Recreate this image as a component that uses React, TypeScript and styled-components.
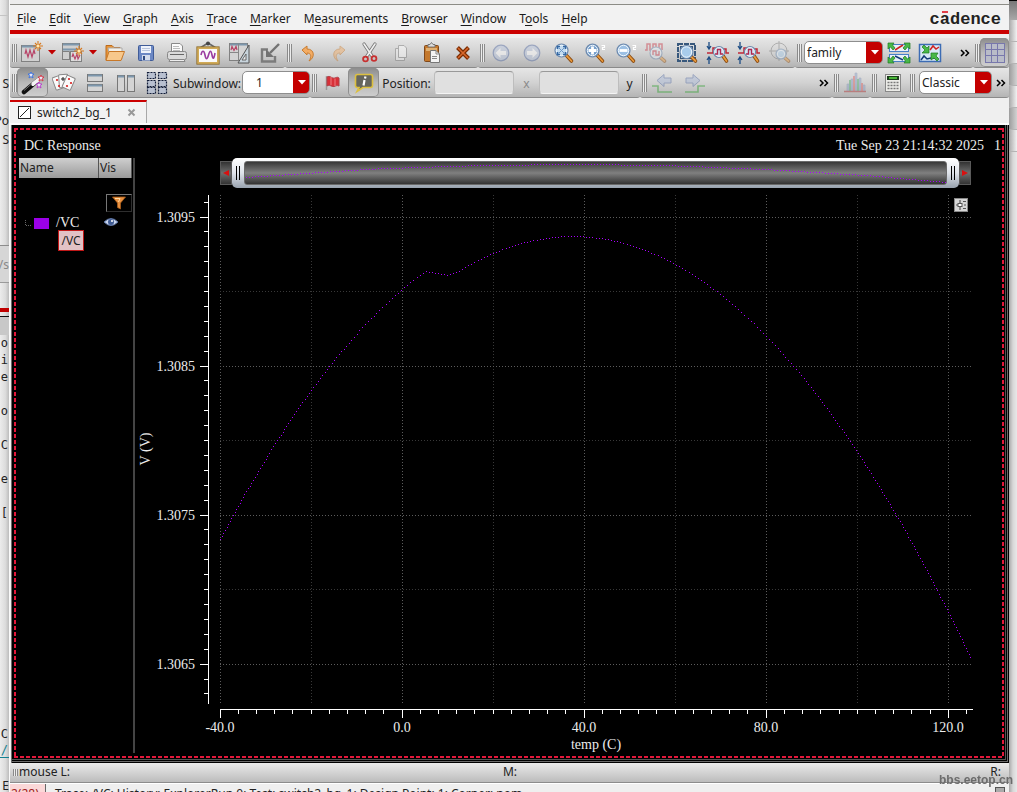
import React, { useLayoutEffect, useMemo, useRef, useState } from 'react';
import styled, { createGlobalStyle, css } from 'styled-components';

const sans = '"Noto Sans", "Open Sans", sans-serif';
const serif = '"Liberation Serif", serif';
const mono = '"DejaVu Sans Mono", monospace';
const purple = '#9b00e8';

const GlobalStyle = createGlobalStyle`
  *, *::before, *::after { box-sizing: border-box; }
  html, body, #root { height: 100%; }
  body { margin: 0; overflow: hidden; background: #ececec; font: 12px/16px ${sans}; color: #222; }
  button, select, input { font: inherit; color: inherit; margin: 0; }
  svg { display: block; flex: none; }
`;

/* ---------- desktop ---------- */

const Desktop = styled.div`
  display: flex;
  height: 100vh;
  overflow: hidden;
`;

const BackWindow = styled.aside`
  flex: none;
  width: 9px;
  overflow: hidden;
  display: flex;
  flex-direction: column;
  background: linear-gradient(90deg, #ececec, #dcdcdc 60%, #bdbdbd);
`;

const PeekRow = styled.div<{ $h: number; $fill?: string; $line?: string; $mono?: boolean; $ink?: string }>`
  flex: none;
  height: ${(p) => p.$h}px;
  line-height: ${(p) => p.$h}px;
  background: ${(p) => p.$fill ?? 'none'};
  border-bottom: ${(p) => (p.$line ? `1px solid ${p.$line}` : '0')};
  color: ${(p) => p.$ink ?? '#222'};
  font-family: ${(p) => (p.$mono ? mono : sans)};
  font-size: 12px;
  white-space: pre;
  display: flex;
  justify-content: flex-end;
  padding-right: ${(p) => (p.$mono ? 1 : 0)}px;
`;

const RightEdge = styled.aside`
  flex: none;
  width: 8px;
  display: flex;
  flex-direction: column;
  background: linear-gradient(90deg, #a8a8a8, #d8d8d8 50%, #e8e8e8);
`;

const EdgeTitle = styled.div`
  height: 20px;
  border-top: 1px solid #000;
  background: linear-gradient(#777, #a8a8a8);
`;

const EdgeCell = styled.div<{ $dark?: boolean }>`
  height: 22px;
  border-bottom: 1px solid #b4b4b4;
  background: ${(p) => (p.$dark ? 'linear-gradient(90deg, #9c9c9c, #d2d2d2)' : 'linear-gradient(90deg, #a8a8a8, #f2f2f2)')};
`;

const Window = styled.main`
  flex: 1;
  min-width: 0;
  display: flex;
  flex-direction: column;
  background: #efefef;
  border-left: 1px solid #fafafa;
`;

const TitleEdge = styled.div`
  flex: none;
  height: 5px;
  background: #ececec;
  border-bottom: 1px solid #8c8c86;
`;

/* ---------- menu ---------- */

const MenuBar = styled.nav`
  flex: none;
  height: 29px;
  display: flex;
  align-items: center;
  padding: 2px 8px 0 1px;
  background: #f2f2f2;
  border-bottom: 4px solid #cb0000;
`;

const MenuItem = styled.button`
  border: 0;
  background: none;
  padding: 0 7px 0 6px;
  color: #1a1a1a;
  white-space: nowrap;
  u { text-underline-offset: 2px; }
`;

const Brand = styled.div`
  position: relative;
  margin-left: auto;
  padding-top: 3px;
  font: bold 17px/20px "Liberation Mono", monospace;
  color: #222;
  &::after {
    content: '';
    position: absolute;
    left: 12px;
    top: 4px;
    width: 6px;
    height: 2px;
    background: #e0404a;
  }
`;

/* ---------- toolbars ---------- */

const ToolRows = styled.div`
  flex: none;
  padding-top: 4px;
`;

const ToolRow = styled.div`
  display: flex;
  height: 30px;
  background: #dedede;
`;

const Group = styled.div<{ $grow?: boolean }>`
  flex: ${(p) => (p.$grow ? '1 1 0' : 'none')};
  min-width: 0;
  display: flex;
  align-items: center;
  padding-left: 2px;
  background: linear-gradient(#e6e6e6, #d2d2d2 50%, #b4b4b4);
  border-bottom: 1px solid #8a8a8a;
  border-radius: 0 0 3px 3px;
`;

const Grip = styled.span`
  flex: none;
  width: 5px;
  height: 18px;
  background: repeating-linear-gradient(90deg, #8a8a8a 0 1px, #ececec 1px 2px);
`;

const ToolButton = styled.button<{ $w?: number; $on?: boolean; $dim?: boolean }>`
  flex: none;
  width: ${(p) => p.$w ?? 31}px;
  height: 29px;
  padding: 0;
  border: 0;
  background: none;
  display: flex;
  align-items: center;
  justify-content: center;
  border-radius: 5px;
  ${(p) => p.$on && css`
    background: linear-gradient(#8c8c8c, #b8b8b8 50%, #cfcfcf);
    box-shadow: inset 0 0 0 1px #8e8e8e;
  `}
  svg { opacity: ${(p) => (p.$dim ? 0.45 : 1)}; }
`;

const MoreButton = styled.button`
  flex: none;
  width: 17px;
  margin-left: auto;
  padding: 0;
  border: 0;
  background: none;
  display: flex;
  justify-content: center;
`;

const ToolLabel = styled.label<{ $w?: number; $dim?: boolean }>`
  flex: none;
  min-width: ${(p) => p.$w ?? 0}px;
  padding-top: 2px;
  text-align: center;
  white-space: nowrap;
  color: ${(p) => (p.$dim ? '#8a8a8a' : '#222')};
`;

const CoordInput = styled.input`
  width: 80px;
  height: 23px;
  border: 1px solid #bdbdbd;
  border-top-color: #999;
  border-bottom-color: #f4f4f4;
  border-radius: 4px;
  background: #e0e0e0;
  padding: 0 4px;
`;

const Combo = styled.span<{ $w: number; $gap?: number }>`
  flex: none;
  position: relative;
  display: block;
  width: ${(p) => p.$w}px;
  height: 23px;
  margin-left: ${(p) => p.$gap ?? 0}px;
  select {
    appearance: none;
    display: block;
    width: 100%;
    height: 100%;
    border: 1px solid #8e8e8e;
    border-radius: 5px;
    padding: 1px 18px 0 2px;
    background: linear-gradient(90deg, #fff calc(100% - 16px), #c40000 calc(100% - 16px));
  }
  svg {
    position: absolute;
    right: 4px;
    top: 9px;
    pointer-events: none;
  }
`;

const IndentSelect = styled.select`
  text-indent: 11px;
`;

/* ---------- tabs ---------- */

const TabStrip = styled.div`
  flex: none;
  height: 27px;
  padding-top: 2px;
  display: flex;
  border-bottom: 2px solid #fdfdfd;
`;

const Tab = styled.div`
  display: flex;
  align-items: center;
  width: 137px;
  padding: 0 10px 0 8px;
  gap: 6px;
  border-top: 2px solid #cb0000;
  border-right: 1px solid #a8a8a8;
  background: #f2f2f2;
`;

const TabTitle = styled.span`
  flex: 1;
`;

const CloseButton = styled.button`
  border: 0;
  padding: 0;
  background: none;
`;

/* ---------- graph frame ---------- */

const Frame = styled.section`
  flex: 1;
  min-height: 0;
  margin-left: 1px;
  padding: 3px 5px 5px 2px;
  background: #000;
  border-left: 1px solid #6a6a6a;
  box-shadow: inset -1px -1px 0 #000, inset -2px -2px 0 #6a6a6a, inset -3px -3px 0 #000, inset -4px -4px 0 #555;
  display: flex;
`;

const dash = '#e3173a 0 4px, transparent 4px 6px';

const Subwindow = styled.div`
  flex: 1;
  min-width: 0;
  padding: 2px;
  display: flex;
  flex-direction: column;
  color: #ececec;
  font-family: ${serif};
  font-size: 14px;
  background:
    repeating-linear-gradient(90deg, ${dash}) 0 0 / 100% 2px no-repeat,
    repeating-linear-gradient(90deg, ${dash}) 0 100% / 100% 2px no-repeat,
    repeating-linear-gradient(180deg, ${dash}) 0 0 / 2px 100% no-repeat,
    repeating-linear-gradient(180deg, ${dash}) 100% 0 / 2px 100% no-repeat,
    #000;
`;

const GraphHeader = styled.header`
  flex: none;
  height: 28px;
  padding: 3px 1px 0 8px;
  display: flex;
  align-items: center;
  gap: 10px;
`;

const Stamp = styled.time`
  margin-left: auto;
`;

const GraphBody = styled.div`
  flex: 1;
  min-height: 0;
  display: flex;
`;

const Legend = styled.div`
  position: relative;
  flex: none;
  width: 116px;
  margin-left: 3px;
  margin-bottom: 3px;
  border-right: 2px solid #444;
`;

const LegendTable = styled.table`
  width: 113px;
  table-layout: fixed;
  border-spacing: 0;
  th, td { padding: 0; vertical-align: middle; }
`;

const HeadCell = styled.th<{ $w: number }>`
  width: ${(p) => p.$w}px;
  height: 20px;
  background: linear-gradient(#cfcfcf, #9a9a9a);
  border-right: 1px solid #555;
  font: 12px/20px ${sans};
  color: #222;
  text-align: left;
  && { padding-left: 1px; }
`;

const FilterCell = styled.td`
  height: 36px;
`;

const FilterButton = styled.button`
  display: flex;
  align-items: center;
  justify-content: center;
  width: 26px;
  height: 18px;
  margin: 14px 0 0 auto;
  padding: 0;
  background: #000;
  border: 1px solid #777;
  border-right-color: #2e2e2e;
  border-bottom-color: #2e2e2e;
`;

const SignalCell = styled.td`
  height: 18px;
  font-size: 14px;
  line-height: 18px;
`;

const SignalRow = styled.div`
  display: flex;
  align-items: center;
  padding-left: 6px;
`;

const Swatch = styled.span`
  width: 15px;
  height: 11px;
  margin: 0 7px 0 3px;
  background: ${purple};
`;

const EyeButton = styled.button`
  display: block;
  padding: 0;
  margin-left: 5px;
  border: 0;
  background: none;
`;

const SignalTip = styled.div`
  position: absolute;
  left: 39px;
  top: 72px;
  width: 26px;
  height: 21px;
  border: 1px solid #c01818;
  background: #e2c2c5;
  color: #222;
  font: 12px/19px ${sans};
  text-align: center;
`;

const PlotColumn = styled.div`
  position: relative;
  flex: 1;
  min-width: 0;
  display: flex;
  flex-direction: column;
`;

const RangeBar = styled.div`
  flex: none;
  height: 30px;
  margin: 0 31px 0 85px;
  display: flex;
  align-items: center;
`;

const PanButton = styled.button`
  flex: none;
  width: 12px;
  height: 24px;
  padding: 0;
  border: 1px solid #5a5a5a;
  background: linear-gradient(#333, #6e6e6e 50%, #333);
  display: flex;
  align-items: center;
  justify-content: center;
`;

const RangeWindow = styled.div`
  flex: 1;
  min-width: 0;
  height: 30px;
  display: flex;
  align-items: center;
  border-radius: 5px;
  background: linear-gradient(#fff, #dfe3ea 50%, #98a2ae);
`;

const RangeHandle = styled.button`
  flex: none;
  width: 12px;
  height: 30px;
  padding: 0;
  border: 0;
  background: none;
  display: flex;
  align-items: center;
  justify-content: center;
  &::before {
    content: '';
    width: 4px;
    height: 14px;
    border: solid #000;
    border-width: 0 1px;
  }
`;

const Overview = styled.div`
  flex: 1;
  min-width: 0;
  height: 24px;
  border: 1px solid #6a6a6a;
  border-radius: 3px;
  background: linear-gradient(#383838, #808080 50%, #333);
  svg { width: 100%; height: 100%; }
`;

const PlotArea = styled.div`
  flex: 1;
  min-height: 0;
  min-width: 0;
  overflow: hidden;
`;

const PlotSettings = styled.button`
  position: absolute;
  right: 34px;
  top: 40px;
  width: 14px;
  height: 14px;
  padding: 0;
  border: 1px solid #888;
  background: #d6d6d6;
`;

/* ---------- status ---------- */

const MouseBar = styled.div`
  flex: none;
  height: 20px;
  padding: 0 8px 1px 3px;
  display: grid;
  grid-template-columns: 1fr auto 1fr;
  align-items: center;
  background: linear-gradient(#eaeaea, #bcbcbc);
  border-bottom: 1px solid #8c8c8c;
`;

const MouseLeft = styled.span`
  display: flex;
  align-items: center;
  gap: 1px;
`;

const MouseMiddle = styled.span`
  padding-left: 6px;
`;

const SmallGrip = styled(Grip)`
  height: 7px;
`;

const MouseRight = styled.span`
  text-align: right;
`;

const StatusBar = styled.footer`
  flex: none;
  position: relative;
  height: 9px;
  border-top: 1px solid #fff;
  display: flex;
  overflow: hidden;
  line-height: 19px;
  white-space: nowrap;
`;

const StatusCount = styled.span`
  width: 36px;
  padding-left: 1px;
  background: #fbd8d8;
  border-right: 1px solid #666;
  color: #a02020;
`;

const StatusText = styled.span`
  flex: 1;
  padding-left: 9px;
`;

const ResizeMark = styled.span`
  flex: none;
  width: 10px;
  height: 10px;
  margin: 3px 4px 0 0;
  border: 1px solid #555;
  background: #aaa;
`;

const Watermark = styled.div`
  position: fixed;
  right: 4px;
  bottom: 4px;
  font: bold 12px/16px "Liberation Sans", sans-serif;
  color: #6c6c6c;
`;

/* ---------- icons ---------- */

const Svg = ({ children, size = 24 }: { children: React.ReactNode; size?: number }) => (
  <svg width={size} height={size} viewBox={`0 0 ${size} ${size}`} fill="none" aria-hidden="true">{children}</svg>
);

const Caret = ({ color }: { color: string }) => (
  <svg width="8" height="5" viewBox="0 0 8 5" aria-hidden="true"><path d="M0 0H8L4 4.5Z" fill={color} /></svg>
);

const Spark = ({ x, y }: { x: number; y: number }) => (
  <g transform={`translate(${x} ${y})`} stroke="#d87a20" strokeWidth="1.1">
    <path d="M0-5V5M-5 0H5M-3-3L3 3M3-3L-3 3" /><circle r="1.6" fill="#ffe9b0" stroke="none" />
  </g>
);

const IconNewGraph = () => (
  <Svg>
    <rect x="2.5" y="4.5" width="18" height="16" fill="#d0d0d0" stroke="#808080" />
    <path d="M3 5.5H20" stroke="#7d97ad" strokeWidth="2" />
    <path d="M6 13L7 9L9 16L11 9L13 16L15 9L16 13" stroke="#b84468" strokeWidth="1.2" />
    <Spark x={19} y={5} />
  </Svg>
);
const IconNewSub = () => (
  <Svg>
    <rect x="2.5" y="2.5" width="17" height="16" fill="#cfcfcf" stroke="#808080" />
    <path d="M3 3.5H19M3 8.5H19" stroke="#7d97ad" strokeWidth="2" />
    <path d="M2.5 10.5H9.5V18" stroke="#808080" />
    <rect x="10.5" y="10.5" width="11" height="10" fill="#ddd" stroke="#808080" />
    <path d="M12 16L13 13L15 18L17 13L18 18L20 14" stroke="#b84468" strokeWidth="1.2" />
    <Spark x={19} y={10} />
  </Svg>
);
const IconOpen = () => (
  <Svg>
    <path d="M3 19V4.5H9L11 6.5H17V9" fill="#e8963a" stroke="#bb6a1c" />
    <path d="M5 7H19V18H7Z" fill="#f4f0e8" stroke="#aaa" />
    <path d="M3 19.5L6 10.5H21.5L18 19.5Z" fill="#f7c88c" stroke="#c87828" />
  </Svg>
);
const IconSave = () => (
  <Svg>
    <rect x="4.5" y="4.5" width="15" height="15" rx="1" fill="#6c88c4" stroke="#405c98" />
    <rect x="7" y="5" width="10" height="7" fill="#eef2fa" />
    <path d="M8 7.5H16M8 9.5H16" stroke="#b8c4dc" />
    <rect x="8" y="14" width="8" height="5.5" fill="#d4dcec" /><rect x="9" y="15" width="2" height="4" fill="#304a80" />
  </Svg>
);
const IconPrint = () => (
  <Svg>
    <path d="M6.5 12V2.5H15L17.5 5V12" fill="#fafafa" stroke="#888" />
    <path d="M8 5.5H14M8 7.5H15M8 9.5H15" stroke="#bbb" />
    <rect x="2.5" y="10.5" width="19" height="8" rx="2" fill="#dadada" stroke="#888" />
    <path d="M5 13.5H19" stroke="#666" />
    <path d="M5 18.5H19L20 20.5H4Z" fill="#eee" stroke="#888" />
  </Svg>
);
const IconPicture = () => (
  <Svg>
    <path d="M4 7L12 2L20 7" stroke="#666" strokeWidth="1.5" /><circle cx="12" cy="2.5" r="2" fill="#444" />
    <rect x="2" y="7" width="20" height="15" fill="#fafafa" stroke="#d0aa58" strokeWidth="2" />
    <rect x=".8" y="5.8" width="22.4" height="17.4" stroke="#8c6a28" strokeWidth=".8" />
    <path d="M5 14C6 9 8 9 9 14S11 19 12.5 14S15 9 16 14S18 18 19 12" stroke="#9a3ca0" strokeWidth="1.6" />
  </Svg>
);
const IconEditGraph = () => (
  <Svg>
    <rect x="2.5" y="2.5" width="18" height="17" fill="#d4d4d4" stroke="#808080" />
    <path d="M3 3.5H20" stroke="#7d97ad" strokeWidth="2" />
    <path d="M2.5 11.5H11.5V3M11.5 11V19" stroke="#888" />
    <path d="M4 9L5 5.5L7 9.5L9 5.5L10 9" stroke="#b84468" strokeWidth="1.2" />
    <path d="M22 4V22H11Z" fill="#c8d4dc" stroke="#555" /><path d="M19 13V19H15Z" fill="#eee" stroke="#666" />
  </Svg>
);
const IconImport = () => (
  <Svg>
    <path d="M10 8.5H4V20.5H17V15" stroke="#7c7c7c" strokeWidth="2.4" />
    <path d="M21 3L12 12" stroke="#727272" strokeWidth="2.4" /><path d="M8 8V16H16Z" fill="#727272" />
  </Svg>
);
const IconUndo = ({ flip }: { flip?: boolean }) => (
  <Svg>
    <g transform={flip ? 'translate(24 0) scale(-1 1)' : undefined}>
      <path d="M6 9L11 5V8C19 8 19 17 13 20C16 15.500 15 12 11 12V14Z" fill="#f3ac64" stroke="#c87c30" strokeLinejoin="round" />
    </g>
  </Svg>
);
const IconCut = () => (
  <Svg>
    <path d="M6 3L14 15M17 3L9 15" stroke="#777" strokeWidth="3.2" strokeLinecap="round" />
    <path d="M6 3L14 15M17 3L9 15" stroke="#f0f0f0" strokeWidth="1.6" strokeLinecap="round" />
    <circle cx="7.5" cy="18" r="2.4" stroke="#c83030" strokeWidth="1.8" /><circle cx="16" cy="17.5" r="2.4" stroke="#c83030" strokeWidth="1.8" />
  </Svg>
);
const IconCopy = () => (
  <Svg>
    <path d="M6.5 7.5H15.5V19.5H6.5Z" fill="#f4f4f4" stroke="#777" /><path d="M9.5 4.5H15L17.5 7V16.5H9.5Z" fill="#fff" stroke="#777" />
  </Svg>
);
const IconPaste = () => (
  <Svg>
    <rect x="4.5" y="4.5" width="14" height="16" rx="1" fill="#c4782c" stroke="#80481a" />
    <rect x="6" y="7" width="11" height="3" fill="#e0b070" /><path d="M8 6V3.5H10L11.5 1.5L13 3.5H15V6Z" fill="#ddd" stroke="#777" />
    <path d="M10.5 9.5H16L19.5 13V21.5H10.5Z" fill="#f4f4f4" stroke="#777" /><path d="M16 9.5V13H19.5M12 15.5H17M12 17.5H17" stroke="#888" />
  </Svg>
);
const IconDelete = () => (
  <Svg>
    <path d="M6.5 6.5L17.5 17.5M17.5 6.5L6.5 17.5" stroke="#7c2c00" strokeWidth="4" />
    <path d="M7 7L17 17M17 7L7 17" stroke="#d8682c" strokeWidth="1.6" />
  </Svg>
);
const IconStep = ({ flip }: { flip?: boolean }) => (
  <Svg>
    <g transform={flip ? 'translate(24 0) scale(-1 1)' : undefined}>
      <circle cx="12" cy="12" r="7.8" fill="#b4c2dc" stroke="#5068a0" strokeWidth="1.2" />
      <path d="M6.500 12L11.500 7V10H17V14H11.500V17Z" fill="#fff" />
    </g>
  </Svg>
);
const Lens = ({ x = 10.5, y = 9.5, r = 6.5, fill = '#a8ccec' }: { x?: number; y?: number; r?: number; fill?: string }) => (
  <g>
    <path d={`M${x + r * 0.75} ${y + r * 0.75}L20.5 20`} stroke="#8a4a10" strokeWidth="3.6" strokeLinecap="round" />
    <path d={`M${x + r * 0.75} ${y + r * 0.75}L20.5 20`} stroke="#e89a3c" strokeWidth="1.8" strokeLinecap="round" />
    <circle cx={x} cy={y} r={r} fill={fill} stroke="#6c88ac" strokeWidth="1.2" />
    <circle cx={x} cy={y} r={r - 1.3} stroke="#eef6fc" />
  </g>
);
const IconZoomFit = () => (
  <Svg>
    <Lens fill="#c4dcf0" />
    <path d="M6.5 8V5.5H9M12 5.5H14.5V8M14.5 11V13.5H12M9 13.5H6.5V11" stroke="#3468a4" strokeWidth="1.6" />
    <path d="M8 7L13 12M13 7L8 12" stroke="#6c98c8" />
  </Svg>
);
const IconZoom2 = ({ minus }: { minus?: boolean }) => (
  <Svg>
    <Lens fill={minus ? '#9cc0e4' : '#78a0cc'} />
    <path d={minus ? 'M6.5 9.5H14.5' : 'M6.5 9.5H14.5M10.5 5.5V13.5'} stroke="#fff" strokeWidth="2.8" />
    <path d="M19.500 4.500H22.500V6.500H20.500V8.500H23" stroke="#fff" strokeWidth="1.2" />
  </Svg>
);
const IconWaveZoom = () => (
  <Svg>
    <path d="M1 9H3V3H6V9H9V3H12V9H15V3H18V9" stroke="#c83040" strokeWidth="1.5" />
    <Lens x={12} y={12} r={6} fill="#d8e4ec" /><path d="M9 14V10H12V14H15V10" stroke="#c83040" strokeWidth="1.3" />
  </Svg>
);
const IconZoomArea = () => (
  <Svg>
    <rect x="3" y="3" width="17" height="17" stroke="#38587c" strokeWidth="2" strokeDasharray="5 1" />
    <rect x="5.5" y="5.5" width="12" height="12" stroke="#38587c" /><Lens x={11.5} y={11} r={6.5} />
  </Svg>
);
const IconRangeZoom = () => (
  <Svg>
    <path d="M3 1V8M1 5L3 8L5 5M3 23V16M1 19L3 16L5 19" stroke="#1c4c84" strokeWidth="1.3" />
    <path d="M1 12H7V7H10M16 8H20V12H23" stroke="#c02838" strokeWidth="1.5" />
    <Lens x={13} y={11} r={5.5} fill="#ccdcec" /><path d="M9 13H11.5V8.5H14.5V13H17" stroke="#b02850" strokeWidth="1.3" />
  </Svg>
);
const IconCrossZoom = () => (
  <Svg>
    <circle cx="11" cy="10" r="8" stroke="#777" /><path d="M11 0V20M1 10H21" stroke="#777" />
    <Lens x={13} y={13} r={5} />
  </Svg>
);
const IconPairZoom = ({ wave }: { wave?: boolean }) => (
  <Svg>
    {wave ? <rect x="1.5" y="3.5" width="21" height="17" fill="#d8e8f6" stroke="#3c6cb4" strokeWidth="1.5" /> : (
      <><rect x="2.5" y="3.5" width="19" height="7" fill="#e8f0f8" stroke="#4880c8" /><rect x="2.5" y="13.5" width="19" height="7" fill="#e8f0f8" stroke="#4880c8" /></>
    )}
    {wave ? <path d="M12 9L15 5L18 8L21 6" stroke="#d02020" strokeWidth="1.5" /> : <path d="M8 9L16 4" stroke="#d02020" strokeWidth="1.5" />}
    <path d={wave ? 'M3 19L6 15L9 18L13 17L20 17' : 'M8 15L16 19'} stroke="#123a78" strokeWidth="1.5" />
    <g fill="#48b848" stroke="#207820" strokeWidth=".7">
      {wave ? (
        <><path d="M4 6L6 4L9 7L11 5V12H4L7 9Z" /><path d="M21 18L19 20L16 17L13 19V12H20L18 15Z" /></>
      ) : (
        <><path d="M1 2H7L5.5 4L8 7L6 9L3.5 6L1 8Z" /><path d="M23 2H17L18.5 4L16 7L18 9L20.5 6L23 8Z" /><path d="M1 22H7L5.5 20L8 17L6 15L3.5 18L1 16Z" /><path d="M23 22H17L18.5 20L16 17L18 15L20.5 18L23 16Z" /></>
      )}
    </g>
  </Svg>
);
const IconGrid = () => (
  <Svg>
    <rect x="2" y="2" width="20" height="20" fill="#b9bcc8" />
    <path d="M2 2.5H22M2 8.5H22M2 14.5H22M2 21.5H22M2.5 2V22M8.5 2V22M14.5 2V22M21.5 2V22" stroke="#7878ac" />
  </Svg>
);
const IconMore = () => (
  <Svg size={10}><path d="M1 2L4 5L1 8M5.5 2L8.5 5L5.5 8" stroke="#000" strokeWidth="1.5" /></Svg>
);
const Star = ({ x, y, color }: { x: number; y: number; color: string }) => (
  <path transform={`translate(${x} ${y})`} d="M0-3L1-1H3L1.4.6L2 3L0 1.6L-2 3L-1.4.6L-3-1H-1Z" fill="#e8e8f8" stroke={color} strokeWidth=".9" />
);
const IconWand = () => (
  <Svg>
    <path d="M3 21L16 10" stroke="#111" strokeWidth="4.5" strokeLinecap="round" /><path d="M12 13L17 9" stroke="#f4f4f4" strokeWidth="4" strokeLinecap="round" />
    <path d="M3 19.5L11 12.5" stroke="#777" />
    <Star x={10} y={4} color="#3870e0" /><Star x={20} y={7} color="#d83040" /><Star x={18} y={14} color="#b838c8" />
  </Svg>
);
const IconCards = () => (
  <Svg>
    <g fill="#fafafa" stroke="#888">
      <rect x="2" y="5" width="9" height="13" rx="1" transform="rotate(-20 7 12)" /><rect x="7" y="3.5" width="9" height="13" rx="1" transform="rotate(-4 11 10)" />
      <rect x="12" y="5" width="9" height="13" rx="1" transform="rotate(24 16 12)" />
    </g>
    <g fill="#d82020"><circle cx="5" cy="9" r="1.1" /><circle cx="7" cy="15" r="1.1" /><circle cx="17" cy="8" r="1.1" /><circle cx="19" cy="12" r="1.1" /><circle cx="15" cy="15" r="1.1" /></g>
    <path d="M11 6V10M9 8H13" stroke="#222" />
  </Svg>
);
const IconRows = () => (
  <Svg><g fill="#d4d4d4" stroke="#787878"><rect x="4.5" y="3.5" width="15" height="7" /><rect x="4.5" y="13.5" width="15" height="7" /></g><path d="M5 4.5H19M5 14.5H19" stroke="#7d97ad" strokeWidth="2" /></Svg>
);
const IconColumns = () => (
  <Svg><g fill="#d4d4d4" stroke="#787878"><rect x="3.5" y="4.5" width="7" height="16" /><rect x="13.5" y="4.5" width="7" height="16" /></g><path d="M4 5.5H10M14 5.5H20" stroke="#7d97ad" strokeWidth="2" /></Svg>
);
const IconTiles = () => (
  <Svg>
    {[1.5, 9.5, 16.5].map((y) => [2.5, 13.5].map((x) => (
      <rect key={`${x}-${y}`} x={x} y={y} width="8" height="6" fill="#b8c0d0" stroke="#111c38" strokeWidth="1.2" strokeDasharray="2 1" />
    )))}
  </Svg>
);
const IconFlag = () => (
  <Svg><path d="M5.5 5V19" stroke="#999" strokeWidth="1.5" /><path d="M6 6C9 4 11 8 14 7C16 6 17 6 18 7V15C16 14 15 15 13 15.5C10 16 9 13 6 15Z" fill="#d83038" stroke="#b04048" /><path d="M10 6V14M14 7.5V15" stroke="#ee7c80" /></Svg>
);
const IconInfo = () => (
  <Svg>
    <path d="M5.5 3.5H18.5Q20.5 3.5 20.5 5.5V14.5Q20.5 16.5 18.5 16.5H11L5 20.5L7 16.5H5.5Q3.5 16.5 3.5 14.5V5.5Q3.5 3.5 5.5 3.5Z" fill="#66665e" stroke="#dcc040" strokeWidth="1.6" />
    <path d="M13.5 5.5L13 7.5M12.5 9L11.5 14.5" stroke="#fff" strokeWidth="2.2" />
  </Svg>
);
const IconEdge = ({ flip }: { flip?: boolean }) => (
  <Svg>
    <path d={flip ? 'M3 21H16V15H23' : 'M1 15H7V21H21'} stroke="#28a028" strokeWidth="1.6" />
    <g transform={flip ? 'translate(24 0) scale(-1 1)' : undefined}><path d="M6 9.500L13 3.500V7H20V12H13V15.500Z" fill="#a8b8d8" stroke="#5068a0" /></g>
  </Svg>
);
const IconHistogram = () => (
  <Svg>
    <path d="M4 20V13H6V20M8 20V8H10V20M12 20V2H14V20M16 20V7H18V20M20 20V14H22V20" fill="#8ca4cc" stroke="#7080a8" strokeWidth=".6" />
    <path d="M7 20V9M15 20V8" stroke="#48a868" strokeWidth="2" /><path d="M11 20V5M19 20V12" stroke="#d86060" strokeWidth="2" /><path d="M1 20.5H23" stroke="#b03030" strokeWidth="1.5" />
  </Svg>
);
const IconCalc = () => (
  <Svg>
    <rect x="4.5" y="3.5" width="15" height="17" fill="#ecece8" stroke="#888" /><rect x="6" y="5" width="12" height="4" fill="#1c3c1c" /><path d="M8 7H16" stroke="#58e040" strokeWidth="1.5" />
    <path d="M6.5 11.5H18M6.5 14.5H18M6.5 17.5H18" stroke="#777" strokeWidth="1.6" strokeDasharray="2 1" />
  </Svg>
);

/* ---------- waveform data ---------- */

type Sample = [number, number];

const samples: Sample[] = [];
for (let t = -40; t <= 5; t += 2.5) samples.push([t, 1.309017 + 2.584e-5 * t - 4.03e-7 * t * t]);
samples.push([10, 1.30911]);
for (let t = 12.5; t <= 125; t += 2.5) samples.push([t, 1.309372 - 3.705e-7 * (t - 37.5) ** 2]);

/* Single-pixel dots, one for every third pixel along the trace's longer axis. */
function dottedTrace(points: Sample[]) {
  let d = '';
  let phase = 0;
  for (let i = 1; i < points.length; i++) {
    const [x0, y0] = points[i - 1];
    const [x1, y1] = points[i];
    const n = Math.max(1, Math.round(Math.max(Math.abs(x1 - x0), Math.abs(y1 - y0))));
    for (let k = 0; k < n; k++, phase++) {
      if (phase % 3 === 0) {
        d += `M${Math.round(x0 + ((x1 - x0) * k) / n)} ${Math.round(y0 + ((y1 - y0) * k) / n)}h1v1h-1z`;
      }
    }
  }
  return d;
}

const overviewTrace = dottedTrace([
  [1, 15], [60, 11], [120, 7], [170, 5], [240, 3], [330, 2], [420, 3], [520, 7], [620, 13], [701, 20],
]);

const pad = { left: 85, right: 31, top: 7, bottom: 53 };

function Plot() {
  const ref = useRef<HTMLDivElement>(null);
  const [size, setSize] = useState({ w: 0, h: 0 });

  useLayoutEffect(() => {
    const el = ref.current;
    if (!el) return;
    const measure = () => setSize({ w: el.clientWidth, h: el.clientHeight });
    measure();
    const observer = new ResizeObserver(measure);
    observer.observe(el);
    return () => observer.disconnect();
  }, []);

  const { w, h } = size;
  const x0 = pad.left;
  const x1 = w - pad.right;
  const yTop = pad.top;
  const yBottom = h - pad.bottom;
  const sx = (t: number) => x0 + ((t + 40) / 165) * (x1 - x0);
  const sy = (v: number) => yTop + ((1.309648 - v) / 0.003409) * (yBottom - yTop);
  const trace = useMemo(
    () => (w > 0 ? dottedTrace(samples.map(([t, v]) => [sx(t), sy(v)] as Sample)) : ''),
    [w, h],
  );

  const xTicks = Array.from({ length: 42 }, (_, i) => -40 + i * 4);
  const yTicks = Array.from({ length: 34 }, (_, i) => 13096 - i);
  const half = (n: number) => Math.floor(n) + 0.5;

  return (
    <PlotArea ref={ref}>
      {w > 0 && (
        <svg width={w} height={h} role="img" aria-label="VC against temperature" fontFamily={serif} fontSize="14" fill="#ececec">
          <g strokeDasharray="1 2" shapeRendering="crispEdges">
            {[-40, -20, 0, 20, 40, 60, 80, 100, 120].map((t) => (
              <path key={t} d={`M${half(sx(t))} ${yTop}V${yBottom}`} stroke={t % 40 === 0 ? '#5c5c5c' : '#383838'} />
            ))}
            {[1.3095, 1.309, 1.3085, 1.308, 1.3075, 1.307, 1.3065].map((v, i) => (
              <path key={v} d={`M${x0} ${half(sy(v))}H${x1}`} stroke={i % 2 === 0 ? '#5c5c5c' : '#383838'} />
            ))}
          </g>
          <path d={trace} fill="#a800fc" shapeRendering="crispEdges" />
          <g stroke="#fff" shapeRendering="crispEdges">
            <path d={`M73.5 ${yTop}V${yBottom + 1}M${x0} ${yBottom + 6.5}H${x1 + 2}`} />
            {yTicks.map((v) => (
              <path key={v} d={`M${v % 10 === 5 ? 65 : 69} ${half(sy(v / 10000))}H73`} />
            ))}
            {xTicks.map((t) => (
              <path key={t} d={`M${half(sx(t))} ${yBottom + 7}v${t % 40 === 0 ? 8 : 4}`} />
            ))}
          </g>
          {[1.3095, 1.3085, 1.3075, 1.3065].map((v) => (
            <text key={v} x="60" y={Math.round(sy(v)) + 5} textAnchor="end">{v.toFixed(4)}</text>
          ))}
          {[-40, 0, 40, 80, 120].map((t) => (
            <text key={t} x={Math.round(sx(t))} y={yBottom + 29} textAnchor="middle">{t.toFixed(1)}</text>
          ))}
          <text x={Math.round((x0 + x1) / 2)} y={yBottom + 46} textAnchor="middle">temp (C)</text>
          <text transform={`translate(15 ${Math.round((yTop + yBottom) / 2)}) rotate(-90)`} textAnchor="middle">V (V)</text>
        </svg>
      )}
    </PlotArea>
  );
}

/* ---------- page ---------- */

const menus: [string, string, string][] = [
  ['', 'F', 'ile'], ['', 'E', 'dit'], ['', 'V', 'iew'], ['', 'G', 'raph'], ['', 'A', 'xis'], ['', 'T', 'race'],
  ['', 'M', 'arker'], ['M', 'e', 'asurements'], ['', 'B', 'rowser'], ['', 'W', 'indow'], ['T', 'o', 'ols'], ['', 'H', 'elp'],
];

type Tool = { name: string; icon: React.ReactNode; dim?: boolean; on?: boolean; w?: number };

const fileTools: Tool[] = [
  { name: 'New window', icon: <IconNewGraph />, w: 28 },
  { name: 'New window options', icon: <Caret color="#c00000" />, w: 13 },
  { name: 'New subwindow', icon: <IconNewSub />, w: 28 },
  { name: 'New subwindow options', icon: <Caret color="#c00000" />, w: 13 },
  { name: 'Open', icon: <IconOpen /> },
  { name: 'Save', icon: <IconSave /> },
  { name: 'Print', icon: <IconPrint /> },
  { name: 'Save image', icon: <IconPicture /> },
  { name: 'Edit graph', icon: <IconEditGraph /> },
  { name: 'Import', icon: <IconImport /> },
];
const editTools: Tool[] = [
  { name: 'Undo', icon: <IconUndo /> },
  { name: 'Redo', icon: <IconUndo flip />, dim: true },
  { name: 'Cut', icon: <IconCut /> },
  { name: 'Copy', icon: <IconCopy />, dim: true },
  { name: 'Paste', icon: <IconPaste /> },
  { name: 'Delete', icon: <IconDelete /> },
];
const zoomTools: Tool[] = [
  { name: 'Previous view', icon: <IconStep />, dim: true },
  { name: 'Next view', icon: <IconStep flip />, dim: true },
  { name: 'Fit', icon: <IconZoomFit /> },
  { name: 'Zoom in by 2', icon: <IconZoom2 /> },
  { name: 'Zoom out by 2', icon: <IconZoom2 minus /> },
  { name: 'Zoom waveform', icon: <IconWaveZoom />, dim: true },
  { name: 'Zoom area', icon: <IconZoomArea /> },
  { name: 'Zoom X', icon: <IconRangeZoom /> },
  { name: 'Zoom Y', icon: <IconRangeZoom /> },
  { name: 'Zoom at cursor', icon: <IconCrossZoom />, dim: true },
];
const layoutTools: Tool[] = [
  { name: 'Auto layout', icon: <IconWand />, on: true },
  { name: 'Cards', icon: <IconCards /> },
  { name: 'Horizontal', icon: <IconRows /> },
  { name: 'Vertical', icon: <IconColumns /> },
  { name: 'Tiles', icon: <IconTiles /> },
];

const Tools = ({ items }: { items: Tool[] }) => (
  <>
    {items.map((t) => (
      <ToolButton key={t.name} type="button" aria-label={t.name} $w={t.w} $on={t.on} $dim={t.dim}>{t.icon}</ToolButton>
    ))}
  </>
);

const More = () => <MoreButton type="button" aria-label="More tools"><IconMore /></MoreButton>;

const codeRows = ['o', 'i', 'e', '', 'o', '', 'C', '', 'e', '', '['];

export default function App() {
  return (
    <Desktop>
      <GlobalStyle />
      <BackWindow>
        <PeekRow $h={16} $line="#c4c4c4" />
        <PeekRow $h={58} />
        <PeekRow $h={20}>t S</PeekRow>
        <PeekRow $h={18} />
        <PeekRow $h={18}>Po</PeekRow>
        <PeekRow $h={20}>S</PeekRow>
        <PeekRow $h={96} $line="#8c8c8c" />
        <PeekRow $h={37} $line="#9a9a9a" $ink="#888" $fill="#d6d6d6">/s</PeekRow>
        <PeekRow $h={25} />
        <PeekRow $h={4} $fill="#c00000" />
        <PeekRow $h={5} $line="#111" />
        <PeekRow $h={18} $fill="#c8c8c8" />
        {codeRows.map((c, i) => <PeekRow key={i} $h={17} $mono>{c}</PeekRow>)}
        <PeekRow $h={204} />
        <PeekRow $h={17} $mono>C</PeekRow>
        <PeekRow $h={15} $mono $ink="#148090" $line="#148090">/</PeekRow>
        <PeekRow $h={19} />
        <PeekRow $h={17}>E</PeekRow>
      </BackWindow>

      <Window>
        <TitleEdge />
        <MenuBar>
          {menus.map(([pre, key, post]) => (
            <MenuItem key={pre + key + post} type="button">{pre}<u>{key}</u>{post}</MenuItem>
          ))}
          <Brand>cadence</Brand>
        </MenuBar>

        <ToolRows>
          <ToolRow>
            <Group><Grip /><Tools items={fileTools} /></Group>
            <Group><Grip /><Tools items={editTools} /></Group>
            <Group><Grip /><Tools items={zoomTools} /></Group>
            <Group $grow>
              <Grip />
              <Combo $w={79} $gap={2}>
                <select aria-label="Strip mode" defaultValue="family"><option>family</option><option>trace</option></select>
                <Caret color="#fff" />
              </Combo>
              <ToolButton type="button" aria-label="Split strips"><IconPairZoom /></ToolButton>
              <ToolButton type="button" aria-label="Combine strips"><IconPairZoom wave /></ToolButton>
              <More />
            </Group>
            <Group><Grip /><ToolButton type="button" aria-label="Grid" $w={29} $on><IconGrid /></ToolButton></Group>
          </ToolRow>
          <ToolRow>
            <Group>
              <Grip /><Tools items={layoutTools} />
              <ToolLabel htmlFor="subwindow" $w={70}>Subwindow:</ToolLabel>
              <Combo $w={68}>
                <IndentSelect id="subwindow" defaultValue="1"><option>1</option></IndentSelect>
                <Caret color="#fff" />
              </Combo>
            </Group>
            <Group>
              <Grip />
              <ToolButton type="button" aria-label="Marker"><IconFlag /></ToolButton>
              <ToolButton type="button" aria-label="Tracking info" $on><IconInfo /></ToolButton>
              <ToolLabel htmlFor="pos-x" $w={55}>Position:</ToolLabel>
              <CoordInput id="pos-x" aria-label="x position" />
              <ToolLabel htmlFor="pos-x" $w={25} $dim>x</ToolLabel>
              <CoordInput id="pos-y" />
              <ToolLabel htmlFor="pos-y" $w={21}>y</ToolLabel>
            </Group>
            <Group $grow>
              <Grip />
              <ToolButton type="button" aria-label="Previous edge" $dim><IconEdge /></ToolButton>
              <ToolButton type="button" aria-label="Next edge" $dim><IconEdge flip /></ToolButton>
              <More />
            </Group>
            <Group><Grip /><ToolButton type="button" aria-label="Histogram" $dim><IconHistogram /></ToolButton></Group>
            <Group><Grip /><ToolButton type="button" aria-label="Calculator"><IconCalc /></ToolButton></Group>
            <Group>
              <Grip />
              <Combo $w={73} $gap={4}>
                <select aria-label="Workspace" defaultValue="Classic"><option>Classic</option></select>
                <Caret color="#fff" />
              </Combo>
              <More />
            </Group>
          </ToolRow>
        </ToolRows>

        <TabStrip>
          <Tab>
            <Svg size={13}><rect x=".5" y=".5" width="12" height="12" fill="#fff" stroke="#222" /><path d="M2 11L11 2" stroke="#222" /></Svg>
            <TabTitle>switch2_bg_1</TabTitle>
            <CloseButton type="button" aria-label="Close tab">
              <Svg size={9}><path d="M1.5 1.5L7.5 7.5M7.5 1.5L1.5 7.5" stroke="#999" strokeWidth="2" /></Svg>
            </CloseButton>
          </Tab>
        </TabStrip>

        <Frame>
          <Subwindow>
            <GraphHeader>
              <span>DC Response</span>
              <Stamp>Tue Sep 23 21:14:32 2025</Stamp>
              <span>1</span>
            </GraphHeader>
            <GraphBody>
              <Legend>
                <LegendTable>
                  <thead>
                    <tr><HeadCell $w={80}>Name</HeadCell><HeadCell $w={33}>Vis</HeadCell></tr>
                  </thead>
                  <tbody>
                    <tr>
                      <FilterCell colSpan={2}>
                        <FilterButton type="button" aria-label="Filter">
                          <Svg size={14}><path d="M.5 1H13.5L8.5 7V13L5.5 11.5V7Z" fill="#e89040" stroke="#a85c18" strokeWidth=".8" /><path d="M3 2.5H8L6.5 6" stroke="#ffd8a0" /></Svg>
                        </FilterButton>
                      </FilterCell>
                    </tr>
                    <tr>
                      <SignalCell>
                        <SignalRow>
                          <Svg size={6}><path d="M.5 0V5.5H6" stroke="#666" strokeDasharray="1 1" /></Svg>
                          <Swatch />/VC
                        </SignalRow>
                      </SignalCell>
                      <SignalCell>
                        <EyeButton type="button" aria-label="Hide /VC">
                          <Svg size={14}><path d="M0 6Q7-1 14 6Q7 13 0 6Z" fill="#c8d4ec" stroke="#5870a0" /><circle cx="7" cy="6" r="3" fill="#405c94" /><circle cx="8" cy="5" r="1" fill="#fff" /></Svg>
                        </EyeButton>
                      </SignalCell>
                    </tr>
                  </tbody>
                </LegendTable>
                <SignalTip>/VC</SignalTip>
              </Legend>
              <PlotColumn>
                <RangeBar>
                  <PanButton type="button" aria-label="Pan left"><Svg size={8}><path d="M7 1V7L1 4Z" fill="#d81010" /></Svg></PanButton>
                  <RangeWindow>
                    <RangeHandle type="button" aria-label="Range start" />
                    <Overview>
                      <svg viewBox="0 0 701 22" preserveAspectRatio="none" aria-hidden="true">
                        <path d={overviewTrace} fill="#a800fc" shapeRendering="crispEdges" />
                      </svg>
                    </Overview>
                    <RangeHandle type="button" aria-label="Range end" />
                  </RangeWindow>
                  <PanButton type="button" aria-label="Pan right"><Svg size={8}><path d="M1 1V7L7 4Z" fill="#d81010" /></Svg></PanButton>
                </RangeBar>
                <Plot />
                <PlotSettings type="button" aria-label="Graph settings">
                  <Svg size={12}><path d="M5 1V11M8 2.5H11M9 6H11M8 9.5H11M1 6H3" stroke="#555" strokeWidth="1.2" /><rect x="3" y="4.5" width="4" height="3" fill="#fff" stroke="#555" /></Svg>
                </PlotSettings>
              </PlotColumn>
            </GraphBody>
          </Subwindow>
        </Frame>

        <MouseBar>
          <MouseLeft><SmallGrip />mouse L:</MouseLeft>
          <MouseMiddle>M:</MouseMiddle>
          <MouseRight>R:</MouseRight>
        </MouseBar>
        <StatusBar>
          <StatusCount>2(28)</StatusCount>
          <StatusText>Trace: /VC; History: ExplorerRun.0; Test: switch2_bg_1; Design Point: 1; Corner: nom</StatusText>
          <ResizeMark />
        </StatusBar>
      </Window>

      <RightEdge>
        <EdgeTitle />
        <EdgeCell /><EdgeCell /><EdgeCell $dark /><EdgeCell /><EdgeCell $dark /><EdgeCell />
      </RightEdge>
      <Watermark>bbs.eetop.cn</Watermark>
    </Desktop>
  );
}
